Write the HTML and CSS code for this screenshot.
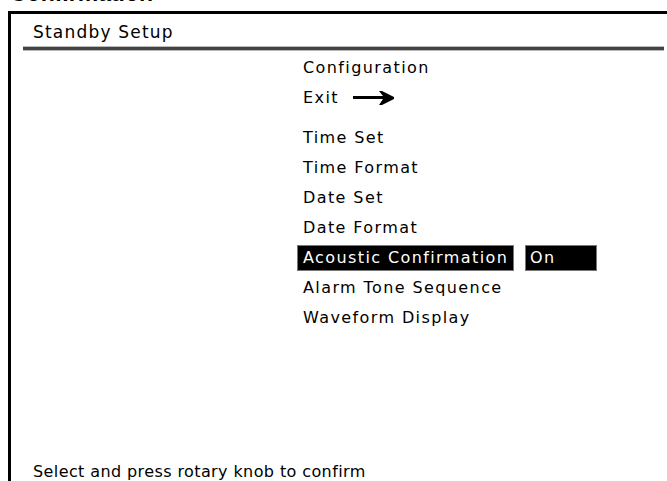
FILE: index.html
```html
<!DOCTYPE html>
<html lang="en">

<head>
    <meta charset="utf-8">
    <title>Standby Setup - Acoustic Confirmation</title>
    <link rel="stylesheet" href="styles.css">
</head>

<body>

    <p class="caption">Confirmation</p>

    <div class="screen">
        <div class="screen-head">Standby Setup</div>
        <hr class="head-rule">

        <ul class="menu">
            <li class="row">Configuration</li>
            <li class="row exit">Exit
                <svg class="arrow" width="42" height="14" viewBox="0 0 42 14">
                    <rect x="0" y="5" width="30" height="3" fill="#000"></rect>
                    <polygon points="26,0 29,0 41,6 41,8 29,14 26,14 30,8 30,5" fill="#000"></polygon>
                </svg>
            </li>
            <li class="row gap">Time Set</li>
            <li class="row">Time Format</li>
            <li class="row">Date Set</li>
            <li class="row">Date Format</li>
            <li class="row selected">
                <span class="item">Acoustic Confirmation</span>
                <span class="value">On</span>
            </li>
            <li class="row">Alarm Tone Sequence</li>
            <li class="row">Waveform Display</li>
        </ul>

        <div class="hint">Select and press rotary knob to confirm</div>
    </div>

</body>

</html>
```

FILE: styles.css
```css
html,
body {
    margin: 0;
    background: #fff;
    overflow: hidden;
}

body {
    width: 667px;
    height: 481px;
}

.caption {
    margin: -17px 0 0 0;
    padding-left: 10px;
    height: 21px;
    font-family: "Liberation Sans", Arial, sans-serif;
    font-weight: bold;
    font-size: 23px;
    line-height: 21px;
    color: #000;
}

.screen {
    margin: 7px 0 0 8px;
    border-left: 3px solid #000;
    border-top: 3px solid #000;
    height: 467px;
    display: flex;
    flex-direction: column;
    font-family: "DejaVu Sans", Verdana, sans-serif;
    color: #000;
}

.screen-head {
    padding: 9px 0 0 22px;
    height: 24px;
    font-size: 17px;
    line-height: 18px;
    letter-spacing: 1.2px;
}

.head-rule {
    margin: 0 3px 0 12px;
    height: 3px;
    border: 0;
    background: #444;
    box-shadow: 0 -1px 0 #bbb, 0 1px 0 #bbb;
}

/* menu in the middle of the panel */
.menu {
    list-style: none;
    margin: 3px 0 0 286px;
    padding: 0;
    font-size: 16px;
    letter-spacing: 1.4px;
}

.row {
    height: 30px;
    line-height: 26px;
    padding-left: 6px;
    display: flex;
    align-items: center;
}

.row.exit {
    height: 29px;
}

.row.gap {
    margin-top: 11px;
}

.arrow {
    margin-left: 14px;
}

.row.selected {
    padding-left: 0;
}

.selected .item,
.selected .value {
    background: #000;
    color: #fff;
    height: 26px;
    box-shadow: inset 0 0 0 1px #777;
    padding-left: 6px;
    box-sizing: border-box;
}

.selected .item {
    width: 217px;
}

.selected .value {
    margin-left: 11px;
    width: 72px;
    padding-left: 5px;
}

.hint {
    margin-top: auto;
    padding: 0 0 0 22px;
    font-size: 16px;
    line-height: 18px;
    letter-spacing: 0.4px;
}
```
